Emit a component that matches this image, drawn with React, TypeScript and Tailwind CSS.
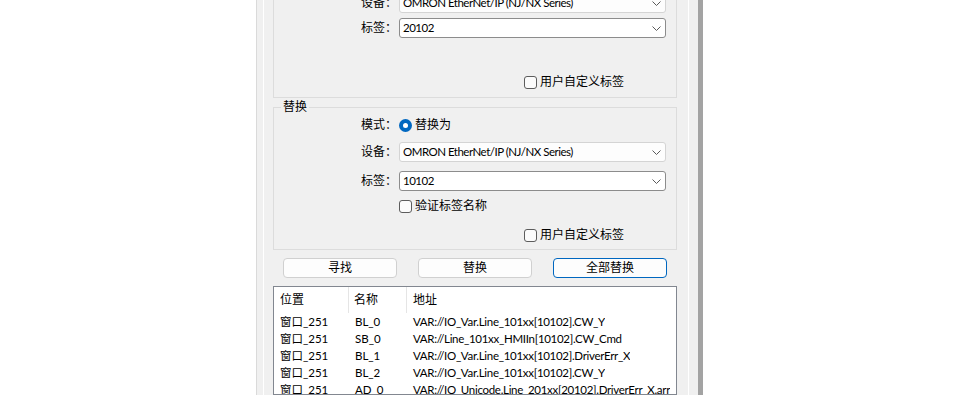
import React from "react";

const rows = [
  { pos: "窗口_251", name: "BL_0", addr: "VAR://IO_Var.Line_101xx[10102].CW_Y" },
  { pos: "窗口_251", name: "SB_0", addr: "VAR://Line_101xx_HMIIn[10102].CW_Cmd" },
  { pos: "窗口_251", name: "BL_1", addr: "VAR://IO_Var.Line_101xx[10102].DriverErr_X" },
  { pos: "窗口_251", name: "BL_2", addr: "VAR://IO_Var.Line_101xx[10102].CW_Y" },
  { pos: "窗口_251", name: "AD_0", addr: "VAR://IO_Unicode.Line_201xx[20102].DriverErr_X.arr" },
];

function Chevron() {
  return (
    <svg width="9" height="5" viewBox="0 0 9 5" className="ml-auto mr-[4px] shrink-0">
      <polyline points="0.5,0.5 4.5,4.5 8.5,0.5" fill="none" stroke="#5a5a5a" strokeWidth="1" />
    </svg>
  );
}

function Combo({ value, editable }: { value: string; editable?: boolean }) {
  return (
    <div
      className={
        editable
          ? "flex h-[20px] w-[267px] items-center rounded-[3px] border border-[#8c8c8c] bg-white pl-[3px]"
          : "flex h-[20px] w-[267px] items-center rounded-[3px] border border-[#d4d4d4] bg-[#fdfdfd] pl-[3px]"
      }
    >
      <span className="text-[11.5px] leading-none tracking-[-0.5px]">{value}</span>
      <Chevron />
    </div>
  );
}

function CheckBox({ label }: { label: string }) {
  return (
    <div className="flex items-center gap-[3px]">
      <span className="h-[13px] w-[13px] rounded-[3px] border border-[#5c5c5c] bg-[#fbfbfb]" />
      <span>{label}</span>
    </div>
  );
}

function Row({ label, children, className }: { label?: string; children: React.ReactNode; className?: string }) {
  return (
    <div className={"flex h-[20px] items-center " + (className ?? "")}>
      <div className="w-[125px] shrink-0 pr-[2px] text-right">{label}</div>
      {children}
    </div>
  );
}

function Radio({ label }: { label: string }) {
  return (
    <div className="flex items-center gap-[3px]">
      <span className="flex h-[13px] w-[13px] items-center justify-center rounded-full bg-[#0067c0]">
        <span className="h-[5px] w-[5px] rounded-full bg-white" />
      </span>
      <span>{label}</span>
    </div>
  );
}

function Group({ title, className, children }: { title: string; className?: string; children: React.ReactNode }) {
  return (
    <div className={"relative border border-[#dcdcdc] " + (className ?? "")}>
      <span className="absolute -top-[9px] left-[7px] bg-[#f0f0f0] px-[2px] leading-[16px]">{title}</span>
      {children}
    </div>
  );
}

export default function App() {
  return (
    <div className="flex h-[395px] w-[960px] overflow-hidden bg-white font-['Lato','Noto_Sans_CJK_SC',sans-serif] text-[12px] text-black">
      <div className="ml-[256px] flex h-full w-[442px] border-l border-[#dadada] bg-[#f0f0f0]">
        <div className="ml-[6px] flex w-[426px] flex-col border-x border-white pl-[9px] pr-[11px]">
          <Group title="查找" className="-mt-[44px] pb-[5px] pt-[7px]">
            <Row label="模式：">
              <Radio label="查找" />
            </Row>
            <Row label="设备：" className="mt-[9px]">
              <Combo value="OMRON EtherNet/IP (NJ/NX Series)" />
            </Row>
            <Row label="标签：" className="mt-[5px]">
              <Combo value="20102" editable />
            </Row>
            <div className="mt-[5px] h-[20px]" />
            <div className="mt-[9px] flex h-[20px] items-center pl-[250px]">
              <CheckBox label="用户自定义标签" />
            </div>
          </Group>

          <Group title="替换" className="mt-[9px] pb-[4px] pt-[7px]">
            <Row label="模式：">
              <Radio label="替换为" />
            </Row>
            <Row label="设备：" className="mt-[7px]">
              <Combo value="OMRON EtherNet/IP (NJ/NX Series)" />
            </Row>
            <Row label="标签：" className="mt-[9px]">
              <Combo value="10102" editable />
            </Row>
            <Row className="mt-[5px]">
              <CheckBox label="验证标签名称" />
            </Row>
            <div className="mt-[9px] flex h-[20px] items-center pl-[250px]">
              <CheckBox label="用户自定义标签" />
            </div>
          </Group>

          <div className="mt-[8px] flex gap-[21px] px-[10px]">
            <button className="h-[20px] w-[114px] rounded-[4px] border border-[#d0d0d0] bg-[#fdfdfd] leading-none">寻找</button>
            <button className="h-[20px] w-[114px] rounded-[4px] border border-[#d0d0d0] bg-[#fdfdfd] leading-none">替换</button>
            <button className="h-[20px] w-[114px] rounded-[4px] border border-[#0067c0] bg-[#fdfdfd] leading-none">全部替换</button>
          </div>

          <div className="mt-[8px] flex-1 overflow-hidden border border-[#828790] bg-white">
            <div className="flex h-[26px] items-center">
              <div className="flex h-full w-[75px] shrink-0 items-center border-r border-[#e5e5e5] pl-[6px]">位置</div>
              <div className="flex h-full w-[58px] shrink-0 items-center border-r border-[#e5e5e5] pl-[5px]">名称</div>
              <div className="flex h-full items-center pl-[6px]">地址</div>
            </div>
            {rows.map((r, i) => (
              <div key={i} className="flex h-[17px] items-center whitespace-nowrap text-[11.5px]">
                <div className="w-[75px] shrink-0 overflow-hidden pl-[6px]">{r.pos}</div>
                <div className="w-[58px] shrink-0 overflow-hidden pl-[6px]">{r.name}</div>
                <div className="min-w-0 overflow-hidden pl-[6px] tracking-[-0.3px]">{r.addr}</div>
              </div>
            ))}
          </div>
        </div>
      </div>
      <div className="h-full w-[5px] bg-[#a3a3a3]" />
    </div>
  );
}
